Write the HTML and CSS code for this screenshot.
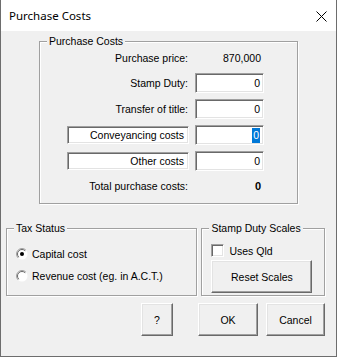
FILE: index.html
```html
<!DOCTYPE html>
<html lang="en">
<head>
    <meta charset="UTF-8">
    <title>Purchase Costs</title>
    <link rel="stylesheet" href="styles.css">
</head>
<body>
    <div class="window">
        <div class="titlebar">
            <span class="title">Purchase Costs</span>
            <svg class="close" width="11" height="11" viewBox="0 0 11 11">
                <path d="M0.5 0.5 L10.5 10.5 M10.5 0.5 L0.5 10.5" stroke="#000" stroke-width="1" fill="none"/>
            </svg>
        </div>

        <div class="client">
            <div class="group costs">
                <span class="legend">Purchase Costs</span>
                <div class="row row-short">
                    <span class="lbl">Purchase price:</span>
                    <span class="val">870,000</span>
                </div>
                <div class="row">
                    <span class="lbl">Stamp Duty:</span>
                    <div class="field">0</div>
                </div>
                <div class="row">
                    <span class="lbl">Transfer of title:</span>
                    <div class="field">0</div>
                </div>
                <div class="row">
                    <div class="field lbl-box">Conveyancing costs</div>
                    <div class="field"><span class="sel">0</span></div>
                </div>
                <div class="row">
                    <div class="field lbl-box">Other costs</div>
                    <div class="field">0</div>
                </div>
                <div class="row row-short">
                    <span class="lbl">Total purchase costs:</span>
                    <span class="val total">0</span>
                </div>
            </div>

            <div class="lower">
                <div class="group tax">
                    <span class="legend">Tax Status</span>
                    <label class="radio">
                        <svg width="12" height="12" viewBox="0 0 12 12">
                            <circle cx="6" cy="6" r="5.5" fill="#fff"/>
                            <path d="M2.1 9.9 A5.5 5.5 0 0 1 9.9 2.1" stroke="#a0a0a0" fill="none"/>
                            <path d="M2.8 9.2 A4.5 4.5 0 0 1 9.2 2.8" stroke="#696969" fill="none"/>
                            <circle cx="6" cy="6" r="2" fill="#000"/>
                        </svg>
                        <span>Capital cost</span>
                    </label>
                    <label class="radio">
                        <svg width="12" height="12" viewBox="0 0 12 12">
                            <circle cx="6" cy="6" r="5.5" fill="#fff"/>
                            <path d="M2.1 9.9 A5.5 5.5 0 0 1 9.9 2.1" stroke="#a0a0a0" fill="none"/>
                            <path d="M2.8 9.2 A4.5 4.5 0 0 1 9.2 2.8" stroke="#696969" fill="none"/>
                        </svg>
                        <span>Revenue cost (eg. in A.C.T.)</span>
                    </label>
                </div>

                <div class="group scales">
                    <span class="legend">Stamp Duty Scales</span>
                    <label class="check">
                        <span class="box"></span>
                        <span>Uses Qld</span>
                    </label>
                    <button class="btn reset">Reset Scales</button>
                </div>
            </div>

            <div class="buttons">
                <button class="btn help">?</button>
                <button class="btn ok">OK</button>
                <button class="btn cancel">Cancel</button>
            </div>
        </div>
    </div>
</body>
</html>
```

FILE: styles.css
```css
* {
    margin: 0;
    padding: 0;
    box-sizing: border-box;
}
body {
    font-family: 'Liberation Sans', Arial, sans-serif;
    font-size: 10.5px;
    color: #000;
    background-color: #f0f0f0;
}
.window {
    width: 337px;
    height: 357px;
    border: 1px solid #6d6d6d;
    border-top: none;
    background-color: #f0f0f0;
    display: flex;
    flex-direction: column;
}
.titlebar {
    height: 31px;
    background-color: #fff;
    display: flex;
    justify-content: space-between;
    align-items: center;
    padding: 0 9px 0 8px;
}
.title {
    font-family: 'Noto Sans', 'Open Sans', sans-serif;
    font-size: 11.5px;
}
.close {
    display: block;
    margin-top: 1px;
}
.client {
    flex: 1;
    padding: 10px 11px 0 5px;
}

/* etched group boxes */
.group {
    position: relative;
    border: 1px solid #a0a0a0;
    box-shadow: inset 1px 1px #fff, 1px 1px #fff;
}
.legend {
    position: absolute;
    top: -7px;
    left: 7px;
    padding: 0 2px;
    line-height: 12px;
    background-color: #f0f0f0;
}
.costs {
    width: 259px;
    margin-left: 33px;
    padding: 4px 0 5px 27px;
}
.row {
    display: flex;
    align-items: center;
    height: 26px;
}
.row-short {
    height: 24px;
}
.lbl {
    width: 122px;
    text-align: right;
    padding-right: 1px;
    margin-right: 6px;
}
.val {
    width: 69px;
    text-align: right;
    padding-right: 3px;
}
.total {
    font-weight: bold;
    font-size: 11px;
}

/* sunken edit boxes */
.field {
    width: 69px;
    height: 20px;
    background-color: #fff;
    border-top: 1px solid #a0a0a0;
    border-left: 1px solid #a0a0a0;
    border-bottom: 1px solid #fff;
    border-right: 1px solid #fff;
    box-shadow: inset 1px 1px #696969, inset -1px -1px #e3e3e3;
    text-align: right;
    padding: 0 3px;
    line-height: 18px;
}
.lbl-box {
    width: 122px;
    height: 18px;
    line-height: 16px;
    margin-right: 6px;
    padding-right: 4px;
}
.sel {
    display: inline-block;
    background-color: #0078d7;
    color: #fff;
    line-height: 15px;
    padding: 0 1px;
}

.lower {
    display: flex;
    gap: 4px;
    margin-top: 24px;
}
.tax {
    width: 192px;
    height: 68px;
    padding: 14px 0 0 9px;
}
.radio {
    display: flex;
    align-items: center;
    gap: 4px;
    height: 22px;
}
.radio svg {
    display: block;
}
.scales {
    width: 124px;
    height: 68px;
    padding: 15px 0 0 9px;
}
.check {
    display: flex;
    align-items: center;
    gap: 5px;
    height: 13px;
}
.box {
    width: 13px;
    height: 13px;
    background-color: #fff;
    border-top: 1px solid #a0a0a0;
    border-left: 1px solid #a0a0a0;
    border-bottom: 1px solid #fff;
    border-right: 1px solid #fff;
    box-shadow: inset 1px 1px #696969, inset -1px -1px #e3e3e3;
}

/* raised push buttons */
.btn {
    font-family: inherit;
    font-size: 10.5px;
    color: #000;
    background-color: #f0f0f0;
    height: 33px;
    border-top: 1px solid #fff;
    border-left: 1px solid #fff;
    border-bottom: 1px solid #696969;
    border-right: 1px solid #696969;
    box-shadow: inset -1px -1px #a0a0a0, inset 1px 1px #e3e3e3;
}
.reset {
    display: block;
    width: 101px;
    margin-top: 3px;
}
.buttons {
    display: flex;
    justify-content: flex-end;
    margin-top: 7px;
}
.help {
    width: 32px;
    margin-right: 25px;
}
.ok {
    width: 60px;
    margin-right: 8px;
}
.cancel {
    width: 59px;
}
```
